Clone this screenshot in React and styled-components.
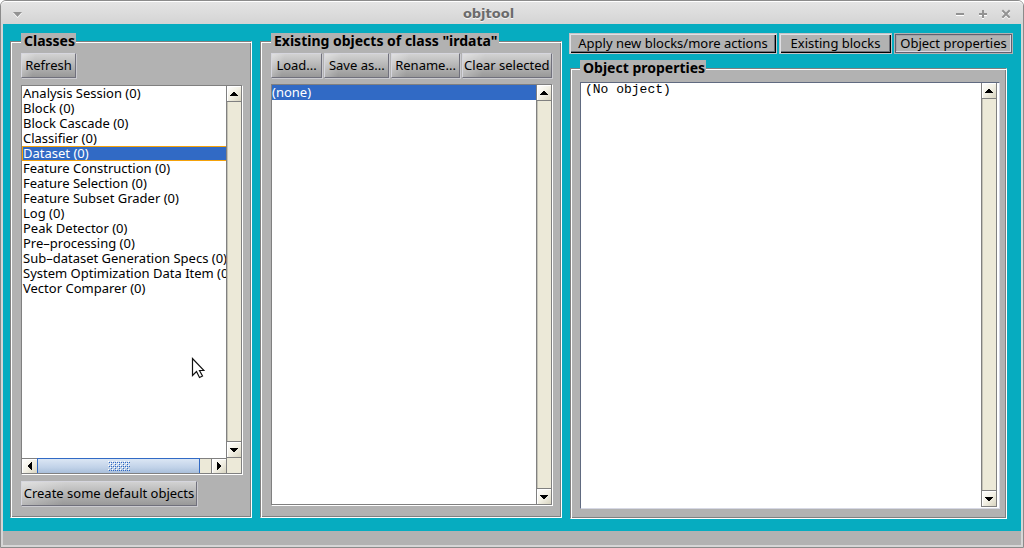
import React from "react";
import styled, { createGlobalStyle, css } from "styled-components";

const GlobalStyle = createGlobalStyle`
  * { box-sizing: border-box; }
  body {
    margin: 0;
    background: #fff;
    font-family: "Noto Sans", sans-serif;
    font-size: 13px;
    line-height: 15px;
    color: #000;
  }
  button, textarea { font: inherit; color: inherit; margin: 0; }
`;

const Window = styled.div`
  display: flex;
  flex-direction: column;
  min-height: 100vh;
  padding: 0 2px 2px;
  border: 1px solid #8b8b8b;
  border-radius: 6px 6px 0 0;
  background: #d6d6d6;
`;

const TitleBar = styled.header`
  display: grid;
  grid-template-columns: 1fr auto 1fr;
  align-items: center;
  height: 23px;
  margin: 0 -2px;
  padding: 2px 9px 0 10px;
  border-top: 1px solid #fff;
  border-radius: 5px 5px 0 0;
  background: linear-gradient(#e4e4e4, #d4d4d4);
`;

const Title = styled.h1`
  margin: 0;
  padding-right: 48px;
  font: bold 13px/16px "DejaVu Sans", sans-serif;
  color: #6b6b6b;
  text-shadow: 0 1px 0 #f4f4f4;
`;

const WindowControls = styled.div`
  display: flex;
  justify-content: flex-end;
  gap: 7px;
`;

const WindowButton = styled.button`
  display: block;
  width: 16px;
  height: 16px;
  padding: 0;
  border: 0;
  background: none;
  svg { display: block; filter: drop-shadow(0 1px 0 #fff); }
`;

const Workspace = styled.main`
  flex: 1;
  display: grid;
  grid-template-columns: 242fr 303fr 444fr;
  gap: 7px;
  padding: 9px 8px 12px 7px;
  background: #06acc0;
`;

const Panel = styled.fieldset`
  display: flex;
  flex-direction: column;
  flex: 1;
  min-width: 0;
  margin: ${(p) => p.$margin};
  padding: ${(p) => p.$padding};
  border: 1px solid;
  border-color: #808080 #fff #fff #808080;
  background: #b2b2b2;
  box-shadow: inset 1px 1px #fff, inset -1px -1px #808080;
`;

const Legend = styled.legend`
  padding: 0 1px 2px 3px;
  background: #b2b2b2;
  font-size: 14px;
  font-weight: bold;
  white-space: nowrap;
`;

const ButtonRow = styled.div`
  display: grid;
  grid-template-columns: ${(p) => p.$columns};
  gap: 1px;
`;

const PushButton = styled.button`
  height: 25px;
  padding: 0;
  border: 1px solid;
  border-color: #d6d6de #70707c #70707c #d6d6de;
  box-shadow: 1px 1px #cbcbd0;
  margin: 0 1px 1px 0;
  background: linear-gradient(100deg, #ffffff55, #ffffff00 25%), linear-gradient(#d2d2d2, #989898);
  white-space: nowrap;
  justify-self: ${(p) => (p.$width ? "start" : "stretch")};
  ${(p) => p.$width && css`width: ${p.$width}px;`}
`;

const ListFrame = styled.div`
  flex: 1;
  display: grid;
  grid-template-columns: minmax(0, 1fr) 16px;
  grid-template-rows: minmax(0, 1fr) auto;
  margin: ${(p) => p.$margin};
  border: 1px solid;
  border-color: ${(p) => (p.$editor ? "#606a80 #d6d8e4 #d6d8e4 #606a80" : "#808080 #fff #fff #808080")};
  background: #fff;
  ${(p) => p.$editor && css`padding: 0 2px 1px 0;`}
`;

const List = styled.ul`
  min-width: 0;
  margin: 0;
  padding: 0;
  list-style: none;
  overflow: hidden;
  border-bottom: ${(p) => (p.$line ? "1px solid #808080" : "0")};
`;

const Item = styled.li`
  height: 15px;
  padding-left: ${(p) => (p.$flush ? 0 : 1)}px;
  white-space: nowrap;
  ${(p) => p.$selected && css`background: #316ac5; color: #fff;`}
  ${(p) => p.$focused && css`
    box-shadow: inset 0 1px #f5a20a, inset 1px 0 #f5a20a, inset 0 -1px #f5a20a;
  `}
`;

const ScrollTrack = styled.div`
  display: flex;
  flex-direction: ${(p) => (p.$horizontal ? "row" : "column")};
  justify-content: space-between;
  background: #ece9d8;
  border: 0 solid #808080;
  ${(p) => (p.$horizontal
    ? css`height: 16px; border-width: 1px 0;`
    : css`border-width: 0 1px 1px; box-shadow: inset 1px 0 #c4c2b6;`)}
`;

const ScrollButton = styled.button`
  display: flex;
  align-items: center;
  justify-content: center;
  flex: none;
  width: ${(p) => (p.$horizontal ? 15 : 14)}px;
  height: ${(p) => (p.$horizontal ? 14 : 16)}px;
  padding: 0;
  border: 0 solid #808080;
  ${(p) => p.$dir === "up" && css`border-bottom-width: 1px;`}
  ${(p) => p.$dir === "down" && css`border-top-width: 1px;`}
  ${(p) => p.$dir === "right" && css`border-left-width: 1px;`}
  background: linear-gradient(135deg, #fff, #f3f1e6 50%, #d8d4c0);
  box-shadow: inset 1px 1px #fff;
`;

const Thumb = styled.div`
  display: flex;
  align-items: center;
  justify-content: center;
  flex: 1;
  margin: -1px 11px 0 0;
  border: 1px solid #316ac5;
  border-bottom: 0;
  background: linear-gradient(#dbe6f4, #c1d2e8 60%, #a9bfda);
`;

const ScrollCorner = styled.div`
  border: 0 solid #808080;
  border-width: 0 1px 1px 1px;
  background: #ece9d8;
`;

const RightColumn = styled.div`
  display: flex;
  flex-direction: column;
  min-width: 0;
`;

const Tabs = styled.div`
  display: grid;
  grid-template-columns: 208fr 113fr 119fr;
  gap: 2px;
`;

const Tab = styled.button`
  height: 21px;
  padding: 0 0 1px;
  background: #b2b2b2;
  white-space: nowrap;
  ${(p) => (p["aria-selected"]
    ? css`
      border: 1px solid #b2b2b2;
      box-shadow: inset 1px 1px #606070, inset -1px -1px #606070, inset -2px -2px #d8d8e4, inset 2px 2px #a4a4a8;
    `
    : css`
      border: 1px solid #c4c4c8;
      box-shadow: inset 1px 1px #e0e0e4, inset -1px -1px #000, inset -2px -2px #707078;
    `)}
`;

const PropertiesText = styled.textarea`
  display: block;
  width: 100%;
  min-width: 0;
  height: 100%;
  padding: 0 4px;
  border: 0;
  outline: 0;
  resize: none;
  overflow: hidden;
  background: #fff;
  font: 13px/14px "Liberation Mono", monospace;
`;

const StatusBar = styled.footer`
  height: 14px;
  background: #b2b2b2;
`;

const Pointer = styled.svg`
  position: absolute;
  left: 191px;
  top: 357px;
  pointer-events: none;
`;

const arrows = {
  up: "M3 0h2v1h1v1h1v1h1v1H0V3h1V2h1V1h1z",
  down: "M0 0h8v1H7v1H6v1H5v1H3V3H2V2H1V1H0z",
  left: "M4 0v8H3V7H2V6H1V5H0V3h1V2h1V1h1V0z",
  right: "M0 0h1v1h1v1h1v1h1v2H3v1H2v1H1v1H0z",
};

function Arrow({ dir }) {
  const horizontal = dir === "left" || dir === "right";
  return (
    <ScrollButton type="button" $dir={dir} $horizontal={horizontal} aria-label={`Scroll ${dir}`}>
      <svg width={horizontal ? 4 : 8} height={horizontal ? 8 : 4} shapeRendering="crispEdges">
        <path d={arrows[dir]} />
      </svg>
    </ScrollButton>
  );
}

function VerticalScroll() {
  return (
    <ScrollTrack>
      <Arrow dir="up" />
      <Arrow dir="down" />
    </ScrollTrack>
  );
}

function HorizontalScroll() {
  return (
    <ScrollTrack $horizontal>
      <Arrow dir="left" />
      <Thumb>
        <svg width="22" height="10" shapeRendering="crispEdges">
          <defs>
            <pattern id="grip" width="4" height="4" patternUnits="userSpaceOnUse">
              <path d="M0 0h1v1H0zM2 2h1v1H2z" fill="#fff" />
              <path d="M1 1h1v1H1zM3 3h1v1H3zM3 1h1v1H3z" fill="#316ac5" />
            </pattern>
          </defs>
          <rect width="22" height="10" fill="url(#grip)" />
        </svg>
      </Thumb>
      <Arrow dir="right" />
    </ScrollTrack>
  );
}

const classes = [
  "Analysis Session (0)",
  "Block (0)",
  "Block Cascade (0)",
  "Classifier (0)",
  "Dataset (0)",
  "Feature Construction (0)",
  "Feature Selection (0)",
  "Feature Subset Grader (0)",
  "Log (0)",
  "Peak Detector (0)",
  "Pre–processing (0)",
  "Sub–dataset Generation Specs (0)",
  "System Optimization Data Item (0)",
  "Vector Comparer (0)",
];

export default function App() {
  return (
    <>
      <GlobalStyle />
      <Window>
        <TitleBar>
          <WindowButton type="button" aria-label="Window menu">
            <svg width="16" height="16"><path d="M2 6h9L6.500 11z" fill="#929292" /></svg>
          </WindowButton>
          <Title>objtool</Title>
          <WindowControls>
            <WindowButton type="button" aria-label="Minimize">
              <svg width="16" height="16"><path d="M4 7h8v2H4z" fill="#929292" /></svg>
            </WindowButton>
            <WindowButton type="button" aria-label="Maximize">
              <svg width="16" height="16"><path d="M4 7h3V4h2v3h3v2H9v3H7V9H4z" fill="#929292" /></svg>
            </WindowButton>
            <WindowButton type="button" aria-label="Close">
              <svg width="16" height="16"><path d="M5 5l6 6M11 5l-6 6" stroke="#929292" strokeWidth="2" strokeLinecap="square" /></svg>
            </WindowButton>
          </WindowControls>
        </TitleBar>

        <Workspace>
          <Panel $margin="0 0 1px" $padding="3px 8px 10px 10px">
            <Legend>Classes</Legend>
            <ButtonRow $columns="1fr">
              <PushButton type="button" $width={55}>Refresh</PushButton>
            </ButtonRow>
            <ListFrame $margin="6px 0">
              <List role="listbox" aria-label="Classes">
                {classes.map((name) => (
                  <Item
                    key={name}
                    role="option"
                    aria-selected={name === "Dataset (0)"}
                    $selected={name === "Dataset (0)"}
                    $focused={name === "Dataset (0)"}
                  >
                    {name}
                  </Item>
                ))}
              </List>
              <VerticalScroll />
              <HorizontalScroll />
              <ScrollCorner />
            </ListFrame>
            <ButtonRow $columns="1fr">
              <PushButton type="button" $width={176}>Create some default objects</PushButton>
            </ButtonRow>
          </Panel>

          <Panel $margin="0 0 1px 1px" $padding="3px 8px 11px 10px">
            <Legend>Existing objects of class "irdata"</Legend>
            <ButtonRow $columns="52fr 66fr 69fr 91fr">
              <PushButton type="button">Load...</PushButton>
              <PushButton type="button">Save as...</PushButton>
              <PushButton type="button">Rename...</PushButton>
              <PushButton type="button">Clear selected</PushButton>
            </ButtonRow>
            <ListFrame $margin="5px 0 0">
              <List $line role="listbox" aria-label="Existing objects">
                <Item role="option" aria-selected="true" $selected $flush>(none)</Item>
              </List>
              <VerticalScroll />
            </ListFrame>
          </Panel>

          <RightColumn>
            <Tabs role="tablist">
              <Tab type="button" role="tab" aria-selected={false}>Apply new blocks/more actions</Tab>
              <Tab type="button" role="tab" aria-selected={false}>Existing blocks</Tab>
              <Tab type="button" role="tab" aria-selected={true}>Object properties</Tab>
            </Tabs>
            <Panel $margin="6px 6px 0 1px" $padding="5px 6px 9px 9px">
              <Legend>Object properties</Legend>
              <ListFrame $editor $margin="0">
                <PropertiesText readOnly aria-label="Object properties" defaultValue="(No object)" />
                <VerticalScroll />
              </ListFrame>
            </Panel>
          </RightColumn>
        </Workspace>
        <StatusBar />
      </Window>
      <Pointer width="14" height="22" viewBox="0 0 14 22">
        <path d="M1.500 1.500v17l4-4 3 6 3-1.500-3-5.500h4.500z" fill="#fff" stroke="#111" strokeWidth="1.200" />
      </Pointer>
    </>
  );
}
